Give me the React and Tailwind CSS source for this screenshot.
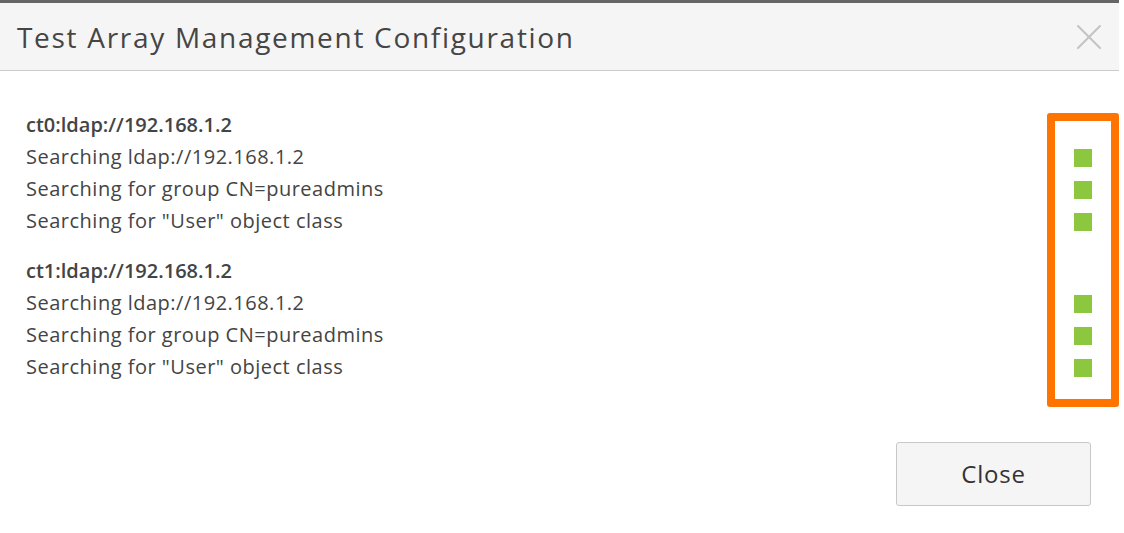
import { X } from 'lucide-react';

const controllers = [
  {
    name: 'ct0:ldap://192.168.1.2',
    steps: ['Searching ldap://192.168.1.2', 'Searching for group CN=pureadmins', 'Searching for "User" object class'],
  },
  {
    name: 'ct1:ldap://192.168.1.2',
    steps: ['Searching ldap://192.168.1.2', 'Searching for group CN=pureadmins', 'Searching for "User" object class'],
  },
];

export default function App() {
  return (
    <div className="w-[1124px] h-[533px] bg-white overflow-hidden font-['Open_Sans','Liberation_Sans',sans-serif] text-[#444]">
      <div className="w-[1119px] border-t-[3px] border-[#666]">
        {/* Header */}
        <div className="h-[68px] bg-[#f5f5f5] border-b border-[#cbcbcb] flex items-center justify-between pl-[17px] pr-[8px]">
          <h2 className="text-[28px] tracking-[1.7px] text-[#454545]">Test Array Management Configuration</h2>
          <X size={44} strokeWidth={1.15} className="text-[#c4c4c4]" />
        </div>

        {/* Test results */}
        <div className="relative pt-[38px] pl-[26px] pr-[27px]">
          {controllers.map((c, i) => (
            <div key={c.name} className={i > 0 ? 'mt-[18px]' : ''}>
              <div className="h-[32px] flex items-center text-[20px] font-semibold">{c.name}</div>
              {c.steps.map(s => (
                <div key={s} className="h-[32px] flex items-center justify-between text-[20px] tracking-[0.5px]">
                  <span>{s}</span>
                  <span className="w-[18px] h-[18px] bg-[#8dc63f] translate-y-[1px]" />
                </div>
              ))}
            </div>
          ))}
          <div className="absolute left-[1047px] top-[42px] w-[72px] h-[294px] border-[8px] border-[#ff7300] rounded-[3px]" />
        </div>

        {/* Footer */}
        <div className="flex justify-end pt-[59px] pr-[28px]">
          <button className="w-[195px] h-[64px] bg-[#f5f5f5] border border-[#c8c8c8] rounded-[3px] text-[24px] tracking-[0.8px] text-[#333]">
            Close
          </button>
        </div>
      </div>
    </div>
  );
}
